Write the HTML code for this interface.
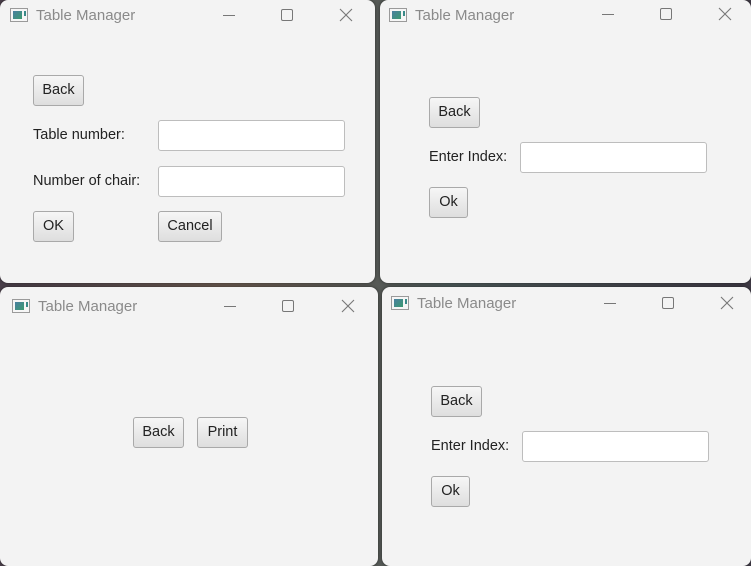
<!DOCTYPE html>
<html><head><style>
*{margin:0;padding:0;box-sizing:border-box}
body{width:751px;height:566px;position:relative;overflow:hidden;background:linear-gradient(90deg,#4a3f4a,#6a5a50 30%,#4d5a5a 60%,#3f3a45);font-family:"Liberation Sans",sans-serif}
.w{position:absolute;background:#f3f3f3;border-radius:8px;box-shadow:0 0 3px rgba(0,0,0,.5);overflow:hidden}
.t{position:absolute;font-size:15px;color:#8a8a8a}
.ic{position:absolute;width:18px;height:14px;border:1px solid #9a9a9a;background:#f6f6f6}
.ic:before{content:"";position:absolute;left:2px;top:2px;width:9px;height:8px;background:linear-gradient(135deg,#4a7fa0,#3b9a70)}
.ic:after{content:"";position:absolute;left:13px;top:2px;width:2px;height:5px;background:#3a8a88}
.mn{position:absolute;width:12px;height:1px;background:#777}
.mx{position:absolute;width:12px;height:12px;border:1px solid #777;border-radius:2px}
.cl{position:absolute;width:14px;height:14px}
.b{position:absolute;height:31px;border:1px solid #a9a9a9;border-radius:3px;background:linear-gradient(#f6f6f6,#dedede);font-size:14.5px;color:#222;text-align:center;line-height:29px}
.i{position:absolute;width:187px;height:31px;border:1px solid #bdbdbd;border-radius:3px;background:#fff}
.l{position:absolute;font-size:14.5px;color:#222;line-height:16px}
</style></head><body>

<div class="w" style="left:0;top:0;width:375px;height:283px"></div>
<div class="w" style="left:380px;top:0;width:371px;height:283px"></div>
<div class="w" style="left:0;top:287px;width:378px;height:279px"></div>
<div class="w" style="left:382px;top:287px;width:369px;height:279px"></div>

<div class="ic" style="left:10px;top:8px"></div><div class="t" style="left:36px;top:7px">Table Manager</div>
<div class="mn" style="left:223px;top:15px"></div><div class="mx" style="left:281px;top:9px"></div>
<svg class="cl" style="left:339px;top:8px" viewBox="0 0 14 14"><path d="M1 1L13 13M13 1L1 13" stroke="#777" stroke-width="1.1"/></svg>

<div class="ic" style="left:389px;top:8px"></div><div class="t" style="left:415px;top:7px">Table Manager</div>
<div class="mn" style="left:602px;top:14px"></div><div class="mx" style="left:660px;top:8px"></div>
<svg class="cl" style="left:718px;top:7px" viewBox="0 0 14 14"><path d="M1 1L13 13M13 1L1 13" stroke="#777" stroke-width="1.1"/></svg>

<div class="ic" style="left:12px;top:299px"></div><div class="t" style="left:38px;top:298px">Table Manager</div>
<div class="mn" style="left:224px;top:306px"></div><div class="mx" style="left:282px;top:300px"></div>
<svg class="cl" style="left:341px;top:299px" viewBox="0 0 14 14"><path d="M1 1L13 13M13 1L1 13" stroke="#777" stroke-width="1.1"/></svg>

<div class="ic" style="left:391px;top:296px"></div><div class="t" style="left:417px;top:295px">Table Manager</div>
<div class="mn" style="left:604px;top:303px"></div><div class="mx" style="left:662px;top:297px"></div>
<svg class="cl" style="left:720px;top:296px" viewBox="0 0 14 14"><path d="M1 1L13 13M13 1L1 13" stroke="#777" stroke-width="1.1"/></svg>

<div class="b" style="left:33px;top:75px;width:51px">Back</div>
<div class="l" style="left:33px;top:127px">Table number:</div>
<div class="i" style="left:158px;top:120px"></div>
<div class="l" style="left:33px;top:173px">Number of chair:</div>
<div class="i" style="left:158px;top:166px"></div>
<div class="b" style="left:33px;top:211px;width:41px">OK</div>
<div class="b" style="left:158px;top:211px;width:64px">Cancel</div>

<div class="b" style="left:429px;top:97px;width:51px">Back</div>
<div class="l" style="left:429px;top:149px">Enter Index:</div>
<div class="i" style="left:520px;top:142px"></div>
<div class="b" style="left:429px;top:187px;width:39px">Ok</div>

<div class="b" style="left:133px;top:417px;width:51px">Back</div>
<div class="b" style="left:197px;top:417px;width:51px">Print</div>

<div class="b" style="left:431px;top:386px;width:51px">Back</div>
<div class="l" style="left:431px;top:438px">Enter Index:</div>
<div class="i" style="left:522px;top:431px"></div>
<div class="b" style="left:431px;top:476px;width:39px">Ok</div>
</body></html>
